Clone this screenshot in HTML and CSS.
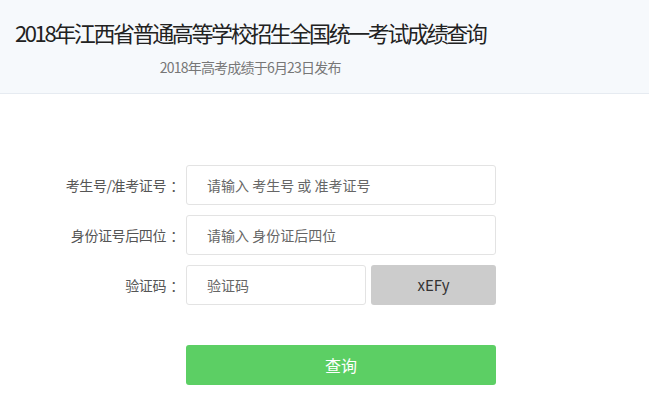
FILE: index.html
```html
<!DOCTYPE html>
<html lang="zh-CN">
<head>
  <meta charset="UTF-8" />
  <meta name="viewport" content="width=device-width, initial-scale=1.0"/>
  <title>2018年江西省普通高等学校招生全国统一考试成绩查询</title>
  <link rel="stylesheet" href="styles.css">
</head>
<body>

  <div class="header">
    <div class="header-inner">
      <h1>2018年江西省普通高等学校招生全国统一考试成绩查询</h1>
      <p class="sub">2018年高考成绩于6月23日发布</p>
    </div>
  </div>

  <form class="query" onsubmit="return false">
    <div class="row">
      <label class="label">考生号/准考证号<span class="colon">：</span></label>
      <input class="field" type="text" placeholder="请输入 考生号 或 准考证号">
    </div>
    <div class="row">
      <label class="label">身份证号后四位<span class="colon">：</span></label>
      <input class="field" type="text" placeholder="请输入 身份证后四位">
    </div>
    <div class="row">
      <label class="label">验证码<span class="colon">：</span></label>
      <div class="captcha-wrap">
        <input class="field short" type="text" placeholder="验证码">
        <div class="captcha">xEFy</div>
      </div>
    </div>
    <div class="row submit-row">
      <span class="label"></span>
      <button class="btn" type="submit">查询</button>
    </div>
  </form>

</body>
</html>
```

FILE: styles.css
```css
body {
  margin: 0;
  background: #fff;
  font-family: "Noto Sans CJK SC", "Noto Sans", sans-serif;
  color: #333;
}

.header {
  height: 93px;
  background: #f6f9fc;
  border-bottom: 1px solid #e6ebf1;
}

.header-inner {
  display: inline-block;
  padding: 15px 0 0 15px;
  text-align: center;
}

h1 {
  margin: 0;
  font-size: 22px;
  font-weight: 400;
  letter-spacing: -2.4px;
  line-height: 34px;
  color: #222;
}

.sub {
  margin: 7px 0 0;
  font-size: 14px;
  letter-spacing: -0.8px;
  line-height: 22px;
  color: #777;
}

.query {
  padding-top: 71px;
}

.row {
  display: flex;
  align-items: center;
  margin-bottom: 10px;
}

.label {
  width: 186px;
  text-align: right;
  font-size: 14px;
  color: #555;
  letter-spacing: -0.4px;
}

.colon {
  display: inline-block;
  width: 18px;
  text-align: center;
  margin-left: 2px;
}

.field {
  box-sizing: border-box;
  width: 310px;
  height: 40px;
  padding: 0 20px;
  border: 1px solid #e3e3e3;
  border-radius: 3px;
  font-family: inherit;
  font-size: 14px;
  color: #333;
  outline: none;
}

.field::placeholder {
  color: #666;
}

.captcha-wrap {
  display: flex;
  gap: 5px;
}

.field.short {
  width: 180px;
}

.captcha {
  width: 125px;
  height: 40px;
  line-height: 40px;
  text-align: center;
  background: #cccccc;
  border-radius: 3px;
  font-size: 15px;
  color: #333;
}

.submit-row {
  margin-top: 40px;
}

.btn {
  width: 310px;
  height: 40px;
  border: none;
  border-radius: 3px;
  background: #5ccf64;
  color: #fff;
  font-family: inherit;
  font-size: 16px;
  cursor: pointer;
}
```
